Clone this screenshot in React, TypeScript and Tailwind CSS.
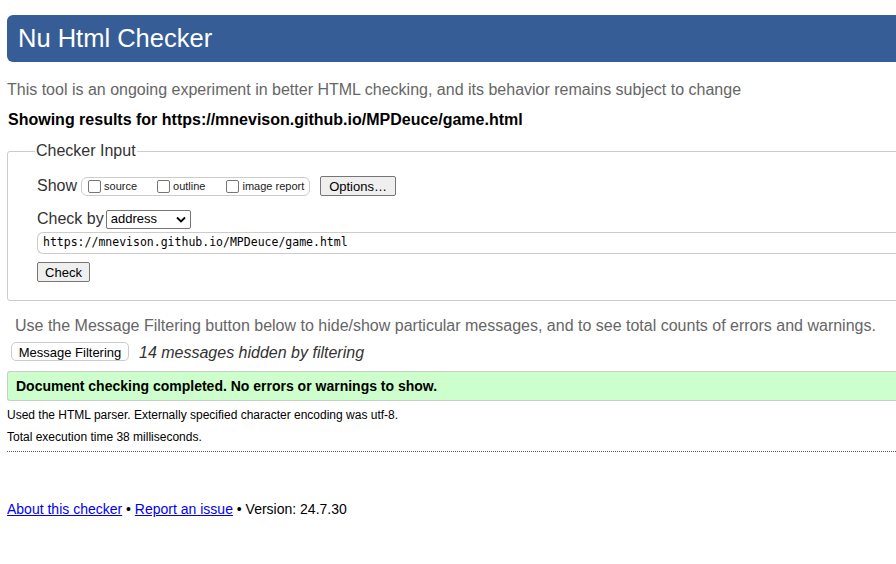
import React from 'react';

const Box = ({ label }: { label: string }) => (
  <label className="flex items-center">
    <span className="inline-block h-[13px] w-[13px] rounded-[2px] border border-[#767676] bg-white" />
    <span className="ml-[3px] text-[11px] text-[#222]">{label}</span>
  </label>
);

const App = () => {
  return (
    <div className="h-[564px] w-[896px] overflow-hidden bg-white font-['Liberation_Sans',Arial,sans-serif] text-[#222]">
      <div className="w-[1000px] pl-[7px]">
        {/* header */}
        <div className="mt-[15px] flex h-[47px] items-center rounded-l-[6px] bg-[#365d95] pl-[11px]">
          <h1 className="text-[25.5px] leading-none text-white">Nu Html Checker</h1>
        </div>

        <p className="mt-[18px] text-[16px] leading-[20px] text-[#666]">
          This tool is an ongoing experiment in better HTML checking, and its behavior remains subject to change
        </p>
        <p className="mt-[10px] pl-[1px] text-[16px] font-bold leading-[20px] text-black">
          Showing results for https://mnevison.github.io/MPDeuce/game.html
        </p>

        {/* checker input */}
        <fieldset className="mt-[12px] rounded-l-[3px] border border-[#ccc] pb-[18px] pl-[29px]">
          <legend className="-ml-[2px] px-[1px] text-[16px] leading-[18px] text-[#333]">Checker Input</legend>
          <div className="mt-[14px] flex h-[24px] items-center">
            <span className="text-[16px] text-[#333]">Show</span>
            <div className="ml-[4px] flex h-[19px] w-[229px] items-center rounded-[6px] border border-[#ccc] pl-[6px]">
              <Box label="source" />
              <span className="w-[20px]" />
              <Box label="outline" />
              <span className="w-[21px]" />
              <Box label="image report" />
            </div>
            <button className="ml-[10px] h-[20px] w-[76px] rounded-[2px] border border-[#767676] bg-[#efefef] text-[13px] text-black">
              Options…
            </button>
          </div>
          <div className="mt-[9px] flex h-[24px] items-center">
            <span className="text-[16px] text-[#333]">Check by</span>
            <div className="ml-[2px] flex h-[19px] w-[85px] items-center justify-between rounded-[2px] border border-[#767676] px-[4px] text-[13px] text-black">
              <span>address</span>
              <svg width="10" height="7" viewBox="0 0 10 7"><path d="M1 1.5 5 5.5 9 1.5" fill="none" stroke="#000" strokeWidth="1.8" /></svg>
            </div>
          </div>
          <div className="mt-[1px] flex h-[22px] items-center rounded-l-[6px] border border-r-0 border-[#ccc] pl-[5px] font-['DejaVu_Sans_Mono',monospace] text-[11.5px] text-black">
            https://mnevison.github.io/MPDeuce/game.html
          </div>
          <button className="mt-[8px] block h-[20px] w-[53px] rounded-[2px] border border-[#767676] bg-[#efefef] text-[13px] text-black">
            Check
          </button>
        </fieldset>

        <p className="mt-[15px] pl-[8px] text-[16px] leading-[20px] text-[#666]">
          Use the Message Filtering button below to hide/show particular messages, and to see total counts of errors and warnings.
        </p>
        <div className="mt-[3px] flex items-center pl-[4px]">
          <button className="h-[19px] w-[118px] rounded-[5px] border border-[#ccc] bg-white text-[13px] text-black">
            Message Filtering
          </button>
          <span className="ml-[10px] translate-y-[2px] text-[16px] italic text-[#333]">14 messages hidden by filtering</span>
        </div>

        <div className="mt-[8px] flex h-[30px] items-center rounded-l-[3px] border border-r-0 border-[#ccc] bg-[#ccffcc] pl-[8px] text-[14px] font-bold text-black">
          Document checking completed. No errors or warnings to show.
        </div>

        <p className="mt-[7px] text-[12px] leading-[14px] text-black">
          Used the HTML parser. Externally specified character encoding was utf-8.
        </p>
        <p className="mt-[8px] text-[12px] leading-[14px] text-black">Total execution time 38 milliseconds.</p>
        <hr className="mt-[7px] border-0 border-t border-dotted border-[#555]" />

        <p className="mt-[47px] text-[14px] text-black">
          <a href="#" className="text-[#00e] underline">About this checker</a>
          {' • '}
          <a href="#" className="text-[#00e] underline">Report an issue</a>
          {' • Version: 24.7.30'}
        </p>
      </div>
    </div>
  );
};

export default App;
